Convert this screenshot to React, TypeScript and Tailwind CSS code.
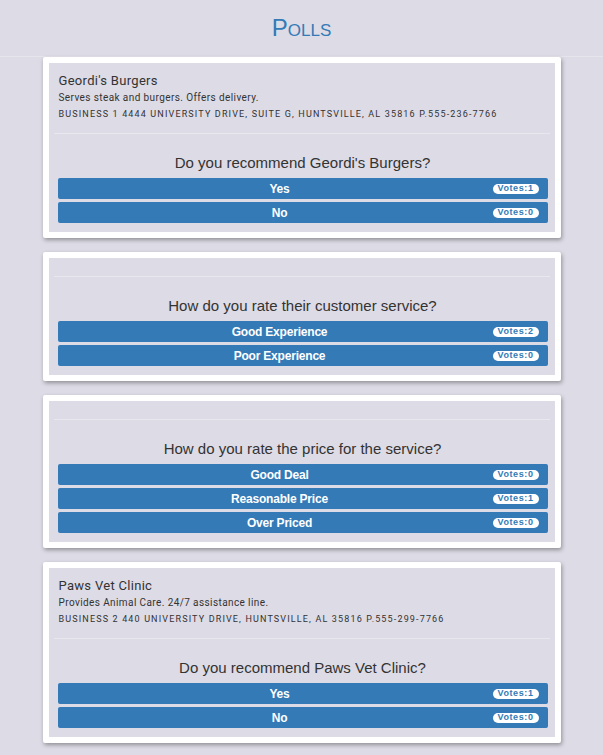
type Option = { label: string; votes: number };

type Poll = {
  business?: { name: string; description: string; address: string };
  question: string;
  options: Option[];
};

const polls: Poll[] = [
  {
    business: {
      name: "Geordi's Burgers",
      description: "Serves steak and burgers. Offers delivery.",
      address: "Business 1 4444 University Drive, Suite G, Huntsville, AL 35816 P.555-236-7766",
    },
    question: "Do you recommend Geordi's Burgers?",
    options: [
      { label: "Yes", votes: 1 },
      { label: "No", votes: 0 },
    ],
  },
  {
    question: "How do you rate their customer service?",
    options: [
      { label: "Good Experience", votes: 2 },
      { label: "Poor Experience", votes: 0 },
    ],
  },
  {
    question: "How do you rate the price for the service?",
    options: [
      { label: "Good Deal", votes: 0 },
      { label: "Reasonable Price", votes: 1 },
      { label: "Over Priced", votes: 0 },
    ],
  },
  {
    business: {
      name: "Paws Vet Clinic",
      description: "Provides Animal Care. 24/7 assistance line.",
      address: "Business 2 440 University Drive, Huntsville, AL 35816 P.555-299-7766",
    },
    question: "Do you recommend Paws Vet Clinic?",
    options: [
      { label: "Yes", votes: 1 },
      { label: "No", votes: 0 },
    ],
  },
];

function PollCard({ poll }: { poll: Poll }) {
  return (
    <div className="rounded-[2px] bg-white p-[6px] shadow-[1px_2px_4px_rgba(0,0,0,0.35)]">
      <div className="bg-[#dddbe5]">
        <div className="px-[10px] py-[9px] font-['Roboto',sans-serif] text-[#333]">
          {poll.business && (
            <div className="mt-[1px] mb-[3px]">
              <div className="text-[13px] leading-[16px] tracking-[0.3px]">{poll.business.name}</div>
              <div className="mt-[2px] text-[10px] leading-[14px] tracking-[0.4px]">{poll.business.description}</div>
              <div className="mt-[2px] text-[9px] leading-[14px] tracking-[1.15px] uppercase">
                {poll.business.address}
              </div>
            </div>
          )}
        </div>
        <div className="mx-[5px] h-px bg-[#e9e7ee]" />
        <div className="pt-[19px] pb-[9px] pl-[9px] pr-[7px] font-['Liberation_Sans',Arial,sans-serif]">
          <div className="mb-[5px] text-center text-[15px] leading-[20px] text-[#333]">{poll.question}</div>
          <div className="flex flex-col gap-[3px]">
            {poll.options.map((o) => (
              <div key={o.label} className="flex h-[21px] items-center rounded-[2px] bg-[#337ab7] pr-[9px]">
                <span className="flex-1 pl-[9px] text-center text-[12px] font-bold tracking-[-0.2px] text-white">
                  {o.label}
                </span>
                <span className="flex h-[10px] w-[46px] items-center justify-center rounded-full bg-white text-[9px] font-bold tracking-[0.6px] text-[#337ab7]">
                  Votes:{o.votes}
                </span>
              </div>
            ))}
          </div>
        </div>
      </div>
    </div>
  );
}

export default function App() {
  return (
    <div className="min-h-screen bg-[#dddbe5] pb-[12px]">
      <div className="flex h-[57px] items-center justify-center border-b border-[#e7e5ec]">
        <h1 className="font-['Liberation_Sans',Arial,sans-serif] text-[24px] text-[#337ab7] [font-variant:small-caps]">
          Polls
        </h1>
      </div>
      <div className="mx-auto flex w-[518px] flex-col gap-[14px]">
        {polls.map((p, i) => (
          <PollCard key={i} poll={p} />
        ))}
      </div>
    </div>
  );
}
